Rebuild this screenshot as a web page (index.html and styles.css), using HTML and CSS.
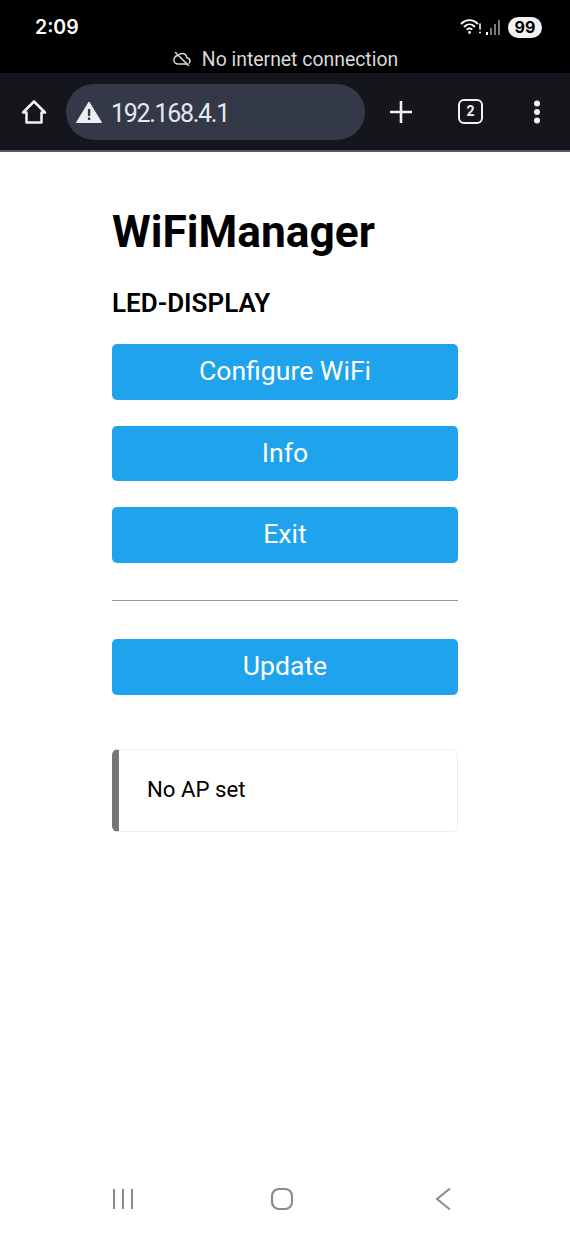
FILE: index.html
```html
<!DOCTYPE html>
<html lang="en">
<head>
    <meta charset="UTF-8">
    <meta name="viewport" content="width=device-width, initial-scale=1.0">
    <title>WiFiManager</title>
    <link rel="stylesheet" href="styles.css">
</head>
<body>
    <div class="phone">
        <div class="status-area">
            <div class="status-bar">
                <span class="clock">2:09</span>
                <div class="status-icons">
                    <svg class="wifi-icon" width="22" height="20" viewBox="0 0 22 20" fill="none" stroke="#fff" stroke-linecap="round">
                        <path d="M1.500 6.500C6 2 13 2 17.500 6.500" stroke-width="1.800"/>
                        <path d="M4.500 9.500C7.500 6.700 11.500 6.700 14.500 9.500" stroke-width="1.800"/>
                        <path d="M7.300 12.300C8.700 11.200 10.300 11.200 11.700 12.300" stroke-width="1.800"/>
                        <circle cx="9.500" cy="15.500" r="1.400" fill="#fff" stroke="none"/>
                        <path d="M20 7V12" stroke-width="1.600"/>
                        <circle cx="20" cy="15.400" r="1" fill="#fff" stroke="none"/>
                    </svg>
                    <svg class="signal-icon" width="16" height="18" viewBox="0 0 16 18" fill="#77797c">
                        <rect x="0" y="14" width="2" height="3" fill="#fff"/>
                        <rect x="4" y="10" width="2" height="7"/>
                        <rect x="8" y="6" width="2" height="11"/>
                        <rect x="12" y="2" width="2" height="15"/>
                    </svg>
                    <span class="battery">99</span>
                </div>
            </div>
            <div class="offline-bar">
                <svg width="20" height="16" viewBox="0 0 20 16" fill="none" stroke="#d8d8d8" stroke-width="1.500" stroke-linecap="round" stroke-linejoin="round">
                    <path d="M6 4.600C3.600 5 2 6.800 2 9C2 11.500 4 13 6 13H15.500"/>
                    <path d="M7.500 3.300C8.300 2.800 9.100 2.500 10 2.500C12.500 2.500 14.500 4.400 14.800 6.800C16.700 7 18 8.300 18 10C18 10.800 17.700 11.500 17.200 12"/>
                    <path d="M3.500 1.500L16.500 14.500"/>
                </svg>
                <span>No internet connection</span>
            </div>
        </div>

        <div class="toolbar">
            <svg class="home-icon" width="28" height="28" viewBox="0 0 28 28" fill="none" stroke="#f1f2f3" stroke-width="2.500" stroke-linejoin="round">
                <path d="M3 14.500L14 3.500L25 14.500H21.500V24.500H6.500V14.500Z"/>
            </svg>
            <div class="url-box">
                <svg width="28" height="24" viewBox="0 0 28 24">
                    <path d="M14 2L26.500 22.500H1.500Z" fill="#eceef1" stroke="#eceef1" stroke-linejoin="round"/>
                    <rect x="12.900" y="9" width="2.400" height="7" fill="#333947"/>
                    <rect x="12.900" y="17.500" width="2.400" height="2.400" fill="#333947"/>
                </svg>
                <span class="url-text">192.168.4.1</span>
            </div>
            <svg class="plus-icon" width="24" height="24" viewBox="0 0 24 24" stroke="#f1f2f3" stroke-width="2.600">
                <path d="M12 1V23M1 12H23"/>
            </svg>
            <span class="tab-count">2</span>
            <svg class="menu-icon" width="8" height="24" viewBox="0 0 8 24" fill="#f1f2f3">
                <circle cx="4" cy="3.500" r="3"/>
                <circle cx="4" cy="12" r="3"/>
                <circle cx="4" cy="20.500" r="3"/>
            </svg>
        </div>

        <div class="page">
            <h1>WiFiManager</h1>
            <h3>LED-DISPLAY</h3>
            <button class="btn">Configure WiFi</button>
            <button class="btn">Info</button>
            <button class="btn">Exit</button>
            <hr>
            <button class="btn">Update</button>
            <div class="msg">No AP set</div>
        </div>

        <div class="nav-bar">
            <svg width="22" height="22" viewBox="0 0 22 22" stroke="#8a8a8a" stroke-width="2">
                <path d="M2 1V21M11 1V21M20 1V21"/>
            </svg>
            <svg class="nav-home" width="24" height="24" viewBox="0 0 24 24" fill="none" stroke="#8a8a8a" stroke-width="2.200">
                <rect x="2" y="2" width="20" height="20" rx="7"/>
            </svg>
            <svg width="16" height="24" viewBox="0 0 16 24" fill="none" stroke="#8a8a8a" stroke-width="2">
                <path d="M15 1.500L2 12L15 22.500"/>
            </svg>
        </div>
    </div>
</body>
</html>
```

FILE: styles.css
```css
* {
    box-sizing: border-box;
}

body {
    margin: 0;
    background-color: white;
    font-family: Roboto, sans-serif;
}

.phone {
    display: flex;
    flex-direction: column;
    height: 1234px;
    overflow: hidden;
}

.status-area {
    height: 73px;
    background-color: black;
    color: white;
}

.status-bar {
    display: flex;
    justify-content: space-between;
    align-items: center;
    height: 44px;
    padding: 10px 28px 0 35px;
}

.clock {
    font-family: Inter, sans-serif;
    font-size: 19.500px;
    font-weight: 600;
}

.status-icons {
    display: flex;
    align-items: center;
    gap: 4px;
}

.battery {
    margin-left: 2px;
    width: 34px;
    height: 21px;
    border-radius: 11px;
    background-color: #f2f2f2;
    color: black;
    font-family: Inter, sans-serif;
    font-size: 16px;
    font-weight: 700;
    line-height: 21px;
    text-align: center;
}

.offline-bar {
    display: flex;
    justify-content: center;
    align-items: center;
    gap: 10px;
    height: 29px;
    padding-top: 1px;
    color: #d8d8d8;
    font-size: 19.400px;
}

.toolbar {
    display: flex;
    align-items: center;
    height: 79px;
    padding: 0 22px 0 20px;
    background-color: #14161b;
    border-bottom: 2px solid #55575c;
}

.url-box {
    display: flex;
    align-items: center;
    gap: 8px;
    width: 299px;
    height: 56px;
    margin-left: 18px;
    padding-left: 9px;
    border-radius: 28px;
    background-color: #333947;
}

.url-text {
    padding-top: 3px;
    color: #e6e8ec;
    font-size: 25px;
    letter-spacing: -1.300px;
}

.plus-icon {
    margin-left: 24px;
}

.tab-count {
    width: 25px;
    height: 25px;
    margin-left: 45px;
    border: 2.500px solid #f1f2f3;
    border-radius: 6px;
    color: #f1f2f3;
    font-size: 14px;
    font-weight: 700;
    line-height: 20px;
    text-align: center;
}

.menu-icon {
    margin-left: 50px;
}

.page {
    flex: 1;
    width: 346px;
    margin: 0 auto;
}

h1 {
    margin: 53px 0 0;
    font-size: 44.300px;
    font-weight: 700;
    line-height: 54px;
    color: black;
}

h3 {
    margin: 28px 0 0;
    font-size: 26px;
    font-weight: 600;
    line-height: 32px;
}

.btn {
    display: block;
    width: 100%;
    height: 55.500px;
    margin-top: 26px;
    padding-bottom: 3px;
    border: 0;
    border-radius: 5px;
    background-color: #1fa3ec;
    color: white;
    font-family: Roboto, sans-serif;
    font-size: 26.600px;
}

h3 + .btn {
    margin-top: 25px;
}

hr {
    height: 1px;
    margin: 37.500px 0 38px;
    border: 0;
    background-color: #999;
}

hr + .btn {
    margin-top: 0;
}

.msg {
    height: 83px;
    margin-top: 54.500px;
    padding: 0 0 2px 28px;
    border: 1px solid #eee;
    border-left: 7px solid #777;
    border-radius: 6px;
    font-size: 22.200px;
    line-height: 78px;
}

.nav-bar {
    display: flex;
    justify-content: space-between;
    align-items: center;
    height: 70px;
    padding: 0 119px 0 112px;
}

.nav-home {
    margin-right: 6px;
}
```
